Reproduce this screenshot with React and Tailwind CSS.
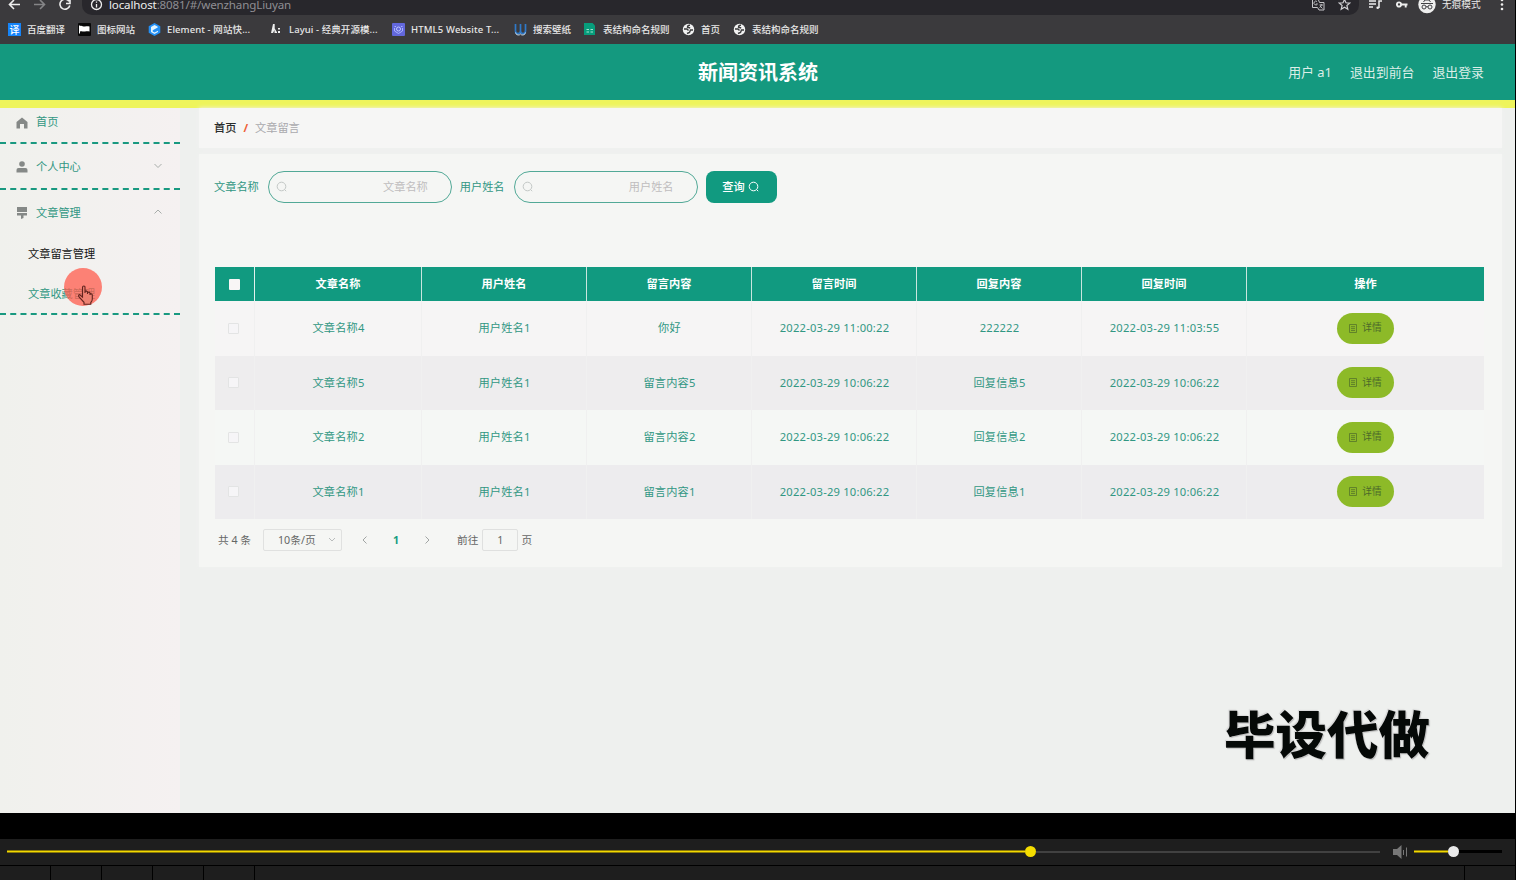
import React, { useState } from "react";

const bookmarks = [
  { label: "百度翻译", icon: "translate", width: "w-[70px]" },
  { label: "图标网站", icon: "flag", width: "w-[70px]" },
  { label: "Element - 网站快...", icon: "element", width: "w-[122px]", tracking: "tracking-[0.100px]" },
  { label: "Layui - 经典开源模...", icon: "layui", width: "w-[122px]", tracking: "tracking-[0.080px]" },
  { label: "HTML5 Website T...", icon: "html", width: "w-[122px]", tracking: "tracking-[0.150px]" },
  { label: "搜索壁纸", icon: "wallpaper", width: "w-[70px]" },
  { label: "表结构命名规则", icon: "sheet", width: "w-[98px]" },
  { label: "首页", icon: "globe", width: "w-[51px]" },
  { label: "表结构命名规则", icon: "globe", width: "w-[98px]" },
];

const columns = ["文章名称", "用户姓名", "留言内容", "留言时间", "回复内容", "回复时间", "操作"];

const rows = [
  ["文章名称4", "用户姓名1", "你好", "2022-03-29 11:00:22", "222222", "2022-03-29 11:03:55"],
  ["文章名称5", "用户姓名1", "留言内容5", "2022-03-29 10:06:22", "回复信息5", "2022-03-29 10:06:22"],
  ["文章名称2", "用户姓名1", "留言内容2", "2022-03-29 10:06:22", "回复信息2", "2022-03-29 10:06:22"],
  ["文章名称1", "用户姓名1", "留言内容1", "2022-03-29 10:06:22", "回复信息1", "2022-03-29 10:06:22"],
];

const rowColors = ["bg-[#f6f5f5]", "bg-[#eeedee]", "bg-[#f5f7f5]", "bg-[#edecee]"];

const gridCols = "grid grid-cols-[40px_167px_165px_165px_165px_165px_165px_237px]";

const BookmarkIcon = ({ name }) => {
  switch (name) {
    case "translate":
      return (
        <span className="flex h-[13px] w-[13px] items-center justify-center bg-[#1684f8] text-[10px] leading-none text-white">
          译
        </span>
      );
    case "flag":
      return (
        <svg width="13" height="13" viewBox="0 0 13 13">
          <rect width="13" height="13" rx="1" fill="#080808" />
          <path d="M1.500 2.500v8" stroke="#fff" />
          <path d="M2 3c2-1 3 1 5 .5 2-.6 3-.3 4.500 0v5c-2-.5-3-.3-4.500 0C5 9 4 7.500 2 8.500z" fill="#fff" />
        </svg>
      );
    case "element":
      return (
        <svg width="13" height="13" viewBox="0 0 13 13">
          <path d="M6.500 0 12.300 3.200v6.600L6.500 13 .7 9.800V3.200z" fill="#2490f5" />
          <path d="M9.800 3.800 6.500 2 3 4v5l3.500 2L10 9V7.800L6.500 9.500 4.700 8.500V7.300l5-2.800z" fill="#e3f4ff" />
        </svg>
      );
    case "layui":
      return (
        <svg width="13" height="13" viewBox="0 0 13 13" fill="#eee">
          <path d="M3 1h1.700v4.500L7 9.300V10H4.500V7L3 10H1z" />
          <path d="M8 5h2v1.500H8zM8 8h2v2H8z" />
        </svg>
      );
    case "html":
      return (
        <svg width="13" height="13" viewBox="0 0 13 13">
          <rect width="13" height="13" rx="1" fill="#6267dc" />
          <path d="M2.500 3.500h1.500M9 3.500h1.500M2.500 5v3l4 2.500 4-2.500V5" fill="none" stroke="#a9b4ff" />
          <circle cx="6.500" cy="6" r="2" fill="none" stroke="#c0c8ff" />
        </svg>
      );
    case "wallpaper":
      return (
        <svg width="13" height="13" viewBox="0 0 13 13" fill="none">
          <path d="M1.500 1v7q0 2.500 2.500 2.500T6.500 8V1M6.500 8q0 2.500 2.500 2.500T11.500 8V1" stroke="#2e79c9" strokeWidth="1.700" />
          <path d="M1.500 9.500Q2 12 4 12t2.500-1Q7 12 9 12t2.500-2.500" stroke="#c5dcf0" />
        </svg>
      );
    case "sheet":
      return (
        <svg width="13" height="13" viewBox="0 0 13 13">
          <path d="M0 0h8.500L11 2.500V12H0z" fill="#079d7b" />
          <path d="M2.500 6.500h2.500M6.500 6.500H9M2.500 9h2.500M6.500 9H9" stroke="#b9eadb" strokeWidth=".9" />
        </svg>
      );
    default:
      return (
        <svg width="13" height="13" viewBox="0 0 13 13">
          <circle cx="6.500" cy="6.500" r="5.700" fill="#f2f2f2" />
          <path d="M8 2.300Q5.500 2 5.500 4.300L8.200 5M2 6h3l1.500 1.500M11 7H8.500L7.500 9.500 5 10.500" fill="none" stroke="#3b3b3d" strokeWidth="1.400" />
        </svg>
      );
  }
};

const SearchIcon = ({ className }) => (
  <svg className={className} width="12" height="12" viewBox="0 0 12 12" fill="none" stroke="currentColor">
    <circle cx="5.500" cy="5.500" r="4.300" />
    <path d="m8.700 8.700 1.500 1.500" />
  </svg>
);

const Chevron = ({ path, className }) => (
  <svg className={className} width="8" height="8" viewBox="0 0 8 8" fill="none" stroke="currentColor">
    <path d={path} />
  </svg>
);

const BrowserBar = () => (
  <div className="h-[44px] shrink-0 overflow-hidden bg-[#3b3a3d] text-[#e8e8e8]">
    <div className="flex h-[15px] items-start">
      <svg width="82" height="15" viewBox="0 0 82 15" fill="none" strokeWidth="1.600">
        <path d="M20 4.500H9.500M14 0 9.500 4.500 14 9" stroke="#eee" />
        <path d="M34 4.500h10.500M40 0l4.500 4.500L40 9" stroke="#858587" />
        <path d="M69 1.200a5 5 0 1 0 .8 4.300M70 0v3.500h-4" stroke="#eee" />
      </svg>
      <div className="flex h-[15px] w-[1277px] items-start rounded-bl-[10px] rounded-br-[10px] bg-[#28272c] pl-2">
        <svg className="shrink-0" width="13" height="12" viewBox="0 0 13 12" fill="none" stroke="#eee">
          <circle cx="6.500" cy="4.500" r="5" strokeWidth="1.300" />
          <path d="M6.500 4v3.500M6.500 1.500v1.300" strokeWidth="1.300" />
        </svg>
        <div className="-mt-[4px] ml-[6px] text-[11.600px] leading-[17px] tracking-[-0.150px] text-[#8f8e93]">
          <span className="text-[#eee]">localhost</span>:8081/#/wenzhangLiuyan
        </div>
        <div className="ml-auto flex items-start gap-[13px] pr-[8px]">
          <svg width="13" height="11" viewBox="0 0 13 11" fill="none" stroke="#c6c6c9">
            <path d="M.5 0v7.500h5l1.500 2.500h5V2.500H7.500L6.500 0" />
            <path d="M5 1.500A1.900 1.900 0 1 0 5.500 4H4M7.500 5H11M9.200 4v1q0 2-1.700 2.500M8 6l2.500 2.500" strokeWidth=".9" />
          </svg>
          <svg width="13" height="11" viewBox="0 0 13 11" fill="none" stroke="#d0d0d3">
            <path d="m6.500-.5 1.500 3.300 3.700.3-2.800 2.400.9 3.700-3.300-2-3.300 2 .9-3.700L1.300 3.100 5 2.800z" strokeWidth="1.200" />
          </svg>
        </div>
      </div>
      <svg className="ml-[10px] shrink-0" width="13" height="11" viewBox="0 0 13 11" fill="none" stroke="#eee" strokeWidth="1.500">
        <path d="M0 1h7M0 4h7M0 7h4M10 8V1h3" />
        <circle cx="8.700" cy="7.700" r="1.300" fill="#eee" stroke="none" />
      </svg>
      <svg className="ml-[14px] shrink-0" width="12" height="11" viewBox="0 0 12 11" fill="none" stroke="#eee" strokeWidth="1.900">
        <circle cx="3" cy="4.500" r="2.100" />
        <path d="M5 4.500h6.500M9.700 4.500v3" />
      </svg>
      <svg className="ml-[10px] shrink-0" width="18" height="14" viewBox="0 0 18 14">
        <circle cx="9" cy="4.500" r="8.700" fill="#eee" />
        <g fill="none" stroke="#414145">
          <path d="M3 3.500h12M5.500 2 7 0h4l1.500 2" />
          <circle cx="6" cy="7" r="2" />
          <circle cx="12" cy="7" r="2" />
          <path d="M8 7q1-1 2 0" />
        </g>
      </svg>
      <span className="-mt-[4px] ml-[6px] whitespace-nowrap text-[9.700px] leading-[17px]">无痕模式</span>
      <svg className="ml-[19px] shrink-0" width="4" height="11" viewBox="0 0 4 11" fill="#eee">
        <circle cx="2" cy="0" r="1.300" />
        <circle cx="2" cy="4.500" r="1.300" />
        <circle cx="2" cy="9" r="1.300" />
      </svg>
    </div>
    <div className="flex h-[29px] items-center pl-2">
      {bookmarks.map((item, index) => (
        <div
          key={index}
          className={`flex shrink-0 items-center gap-[6px] whitespace-nowrap text-[9.500px] font-medium leading-[14px] ${item.width} ${item.tracking || ""}`}
        >
          <BookmarkIcon name={item.icon} />
          <span>{item.label}</span>
        </div>
      ))}
    </div>
  </div>
);

const Sidebar = () => (
  <aside className="h-full w-[180px] shrink-0 bg-linear-to-r from-[#f0f1ed] to-[#f5f1f1] text-[11.200px] text-[#319783]">
    <div className="flex h-[36px] items-center border-b-2 border-dashed border-[#199980] pb-[7px] pl-[16px]">
      <svg className="mt-[3px]" width="12" height="12" viewBox="0 0 12 12" fill="#858987">
        <path d="M6 .5 11.500 5v6.500H8V7H4v4.500H.5V5z" />
      </svg>
      <span className="ml-[8px]">首页</span>
    </div>
    <div className="flex h-[46px] items-center border-b-2 border-dashed border-[#199980] pl-[16px] pr-[18px] pt-[2px]">
      <svg width="12" height="12" viewBox="0 0 12 12" fill="#858987">
        <circle cx="6" cy="3" r="2.800" />
        <path d="M.5 11.500V9q0-2 2-2h7q2 0 2 2v2.500z" />
      </svg>
      <span className="ml-[8px]">个人中心</span>
      <Chevron className="mb-[3px] ml-auto text-[#a8adaa]" path="m.5 2 3.500 3.500L7.500 2" />
    </div>
    <div className="h-[125px] border-b-2 border-dashed border-[#199980]">
      <div className="flex h-[46px] items-center pl-[16px] pr-[18px]">
        <svg width="12" height="12" viewBox="0 0 12 12" fill="#858987">
          <path d="M1 0h10v5H1zM1 6h10v2.500H7.500V11L5 12V8.500H1z" />
        </svg>
        <span className="ml-[8px]">文章管理</span>
        <Chevron className="mb-[2px] ml-auto text-[#a8adaa]" path="M.5 5.500 4 2l3.500 3.500" />
      </div>
      <div className="flex h-[37px] items-center pb-[2px] pl-[28px] text-[#151515]">文章留言管理</div>
      <div className="flex h-[40px] items-center pl-[28px] pt-[2px]">文章收藏管理</div>
    </div>
  </aside>
);

const SearchField = ({ label, value, onChange }) => (
  <label className="flex items-center whitespace-nowrap text-[#319783]">
    {label}
    <span className="ml-[9px] flex h-[32px] w-[184px] items-center rounded-full border border-[#52a997] pl-[7px] pr-[23px]">
      <SearchIcon className="shrink-0 text-[#c3c8c6]" />
      <input
        className="w-full min-w-0 bg-transparent text-right text-[#777] outline-none placeholder:text-[#bfbdbe]"
        placeholder={label}
        value={value}
        onChange={(e) => onChange(e.target.value)}
      />
    </span>
  </label>
);

const MessageTable = () => (
  <div className="ml-px w-[1269px] text-center">
    <div className={`${gridCols} h-[34px] bg-[#119a80] font-bold text-white`}>
      <div className="flex items-center justify-center border-r border-[#e3f1ed]">
        <span className="h-[11px] w-[11px] rounded-[1px] bg-[#f8f6f6]" />
      </div>
      {columns.map((column) => (
        <div key={column} className="flex items-center justify-center border-r border-[#c9e6df] last:border-0">
          {column}
        </div>
      ))}
    </div>
    {rows.map((row, index) => (
      <div key={index} className={`${gridCols} h-[54.500px] text-[#319783] ${rowColors[index]}`}>
        <div className="flex items-center justify-center border-r border-[#f0f0f0] pr-[3px]">
          <span className="h-[11px] w-[11px] rounded-[1px] border border-[#e3e4e4] bg-[#f6f5f7]" />
        </div>
        {row.map((cell, i) => (
          <div key={i} className="flex items-center justify-center whitespace-nowrap border-r border-[#f0f0f0] pl-px tracking-[0.200px]">
            {cell}
          </div>
        ))}
        <div className="flex items-center justify-center">
          <button className="flex h-[31px] w-[57px] items-center justify-center gap-[5px] rounded-full bg-[#8dba28] text-[9.700px] text-[#4c6a2a]">
            <svg width="8" height="9" viewBox="0 0 8 9" fill="none" stroke="#55752a" strokeWidth=".8">
              <path d="M.5.5h7v8h-7zM2 2.700h4M2 4.600h4M2 6.500h4" />
            </svg>
            详情
          </button>
        </div>
      </div>
    ))}
  </div>
);

const Pagination = () => (
  <div className="mt-[10px] flex h-[22px] items-center whitespace-nowrap pl-[4px] text-[10.700px] text-[#656766]">
    <span className="w-[45px]">共 4 条</span>
    <div className="flex h-[22px] w-[79px] items-center rounded-[2px] border border-[#e0e1e0] pl-[14px] pr-[5px]">
      10条/页
      <Chevron className="ml-auto text-[#b9bcbc]" path="m1 2 3 3 3-3" />
    </div>
    <Chevron className="ml-[19px] text-[#a1a5a4]" path="M5.500.5 2 4l3.500 3.500" />
    <span className="ml-[24px] w-[6px] font-bold text-[#159b80]">1</span>
    <Chevron className="ml-[24px] text-[#a1a5a4]" path="M2.500.5 6 4 2.500 7.500" />
    <span className="ml-[26px]">前往</span>
    <div className="ml-[4px] flex h-[22px] w-[36px] items-center justify-center rounded-[2px] border border-[#dfe0df]">1</div>
    <span className="ml-[3px]">页</span>
  </div>
);

const PlayerBar = () => (
  <div className="h-[67px] bg-black">
    <div className="mt-[26px] flex h-[26px] items-center bg-[#1e1e1e] pb-px pl-[7px] pr-[13px]">
      <div className="h-[3px] w-[1018px] border-y border-[#8a7a08] bg-[#f2d900]" />
      <span className="h-[11px] w-[11px] rounded-full bg-[#f5dd00]" />
      <div className="h-[2px] w-[344px] bg-[#414141]" />
      <svg className="ml-[13px]" width="16" height="14" viewBox="0 0 16 14">
        <path d="M0 4h4l4.500-4v14L4 10H0z" fill="#777" />
        <path d="M10.500 5v5M13.500 2.500v9" stroke="#777" />
      </svg>
      <div className="ml-[5px] h-[3px] w-[34px] border-y border-[#8a7a08] bg-[#f2d900]" />
      <span className="h-[11px] w-[11px] rounded-full bg-[#eaeaea]" />
      <div className="h-[3px] flex-1 bg-black" />
    </div>
    <div className="mt-px flex h-[14px] gap-px">
      {[0, 1, 2, 3, 4].map((i) => (
        <span key={i} className="w-[50px] bg-[#1e1e1e]" />
      ))}
      <span className="flex-1 bg-[#1e1e1e]" />
      <span className="w-[50px] bg-[#1e1e1e]" />
    </div>
  </div>
);

const App = () => {
  const [title, setTitle] = useState("");
  const [userName, setUserName] = useState("");

  return (
    <div className="relative flex h-[880px] w-[1516px] flex-col overflow-hidden border-r border-black bg-[#eef0ee] font-['Noto_Sans','Noto_Sans_CJK_SC',sans-serif] text-[11.200px] leading-[16px]">
      <BrowserBar />

      <header className="flex h-[64px] shrink-0 items-center border-b-8 border-[#eef45c] bg-[#14997f] text-white">
        <div className="w-[698px]" />
        <h1 className="pt-[2px] text-[20px] font-bold leading-[28px]">新闻资讯系统</h1>
        <div className="flex flex-1 justify-end gap-[18px] pr-[31px] text-[12.900px] text-[#dceee8]">
          <span>用户 a1</span>
          <span>退出到前台</span>
          <span>退出登录</span>
        </div>
      </header>

      <div className="flex min-h-0 flex-1">
        <Sidebar />
        <main className="min-w-0 flex-1 pl-[19px] pr-[13px]">
          <div className="flex h-[40px] items-center bg-[#f6f6f5] pb-px pl-[15px] shadow-[0_0_4px_#f1f3f1]">
            <span className="font-medium text-[#292c2b]">首页</span>
            <span className="mx-[7px] font-bold text-[#ee6038]">/</span>
            <span className="text-[#aaa9ad]">文章留言</span>
          </div>
          <section className="mt-[6px] h-[413px] bg-[#f5f6f4] pl-[15px] pt-[17px] shadow-[0_0_4px_#f1f3f1]">
            <div className="mb-[64px] flex h-[32px] items-center gap-[8px]">
              <SearchField label="文章名称" value={title} onChange={setTitle} />
              <SearchField label="用户姓名" value={userName} onChange={setUserName} />
              <button className="flex h-[32px] w-[71px] items-center justify-center gap-[3px] rounded-[8px] bg-[#119a80] font-medium text-white">
                查询 <SearchIcon />
              </button>
            </div>
            <MessageTable />
            <Pagination />
          </section>
        </main>
      </div>

      <PlayerBar />

      <div className="absolute left-[64px] top-[268px] h-[38px] w-[38px] rounded-full bg-[#ff5b4c]/75" />
      <svg className="absolute left-[77px] top-[285px]" width="18" height="21" viewBox="0 0 18 21" fill="#ee8172" stroke="#62231e" strokeWidth="1.100">
        <path d="M5.500 12V2.500Q5.500 1 6.800 1T8 2.500V8V6.500q2-1 2.500.5v2-1.500q2-1 2.500.5v2-1q2-.5 2.300 1v4q0 2-1.500 3.500v1.800H7v-2L2 12q-1-2 .5-2.500z" />
      </svg>
      <div className="absolute left-[1224px] top-[699px] whitespace-nowrap text-[51.500px] font-black leading-[70px] text-[#050907] [text-shadow:0_0_2px_#fff,1px_1px_1px_#aaa,-1px_-1px_1px_#ccc]">
        毕设代做
      </div>
    </div>
  );
};

export default App;
